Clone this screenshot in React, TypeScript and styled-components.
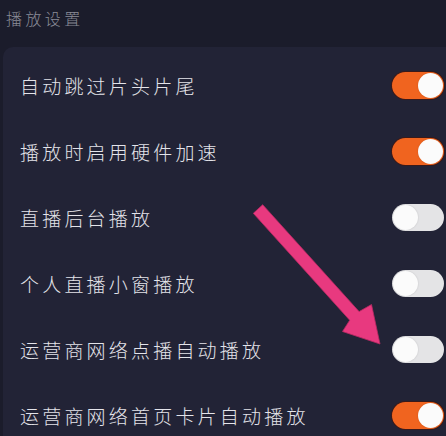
import styled, { createGlobalStyle } from "styled-components";

const GlobalStyle = createGlobalStyle`
    html, body {
        margin: 0;
        padding: 0;
        background: #1b1c2b;
    }
    body {
        font-family: "Noto Sans CJK SC", "Noto Sans", sans-serif;
    }
`;

const Page = styled.div`
    position: relative;
    width: 446px;
    height: 436px;
    overflow: hidden;
    background: #1b1c2b;
`;

const SectionTitle = styled.div`
    height: 47px;
    padding: 4px 0 0 6px;
    box-sizing: border-box;
    font-size: 16px;
    line-height: 28px;
    letter-spacing: 3.4px;
    font-weight: 300;
    color: #8a8b97;
`;

const Card = styled.div`
    margin-left: 3px;
    width: 460px;
    padding-top: 5px;
    background: #222336;
    border-radius: 10px 0 0 0;
    display: flex;
    flex-direction: column;
`;

const Row = styled.div`
    height: 66px;
    display: flex;
    align-items: center;
    justify-content: space-between;
    padding: 0 0 0 17px;
    width: 441px;
    box-sizing: border-box;
`;

const Label = styled.span`
    font-size: 19px;
    letter-spacing: 3.2px;
    font-weight: 300;
    color: #e4e4ea;
`;

const Track = styled.div<{ $on: boolean }>`
    width: 52px;
    height: 27px;
    border-radius: 14px;
    background: ${(p) => (p.$on ? "#f0641f" : "#e4e4e6")};
    box-shadow: ${(p) => (p.$on ? "0 0 0 1px #3a1a1a" : "none")};
    display: flex;
    align-items: center;
    justify-content: ${(p) => (p.$on ? "flex-end" : "flex-start")};
    padding: 0 1px;
    box-sizing: border-box;
`;

const Knob = styled.div`
    width: 25px;
    height: 25px;
    border-radius: 50%;
    background: #fbfbfb;
    box-shadow: 0 0 2px rgba(0, 0, 0, 0.15);
`;

const Pointer = styled.svg`
    position: absolute;
    left: 0;
    top: 0;
    pointer-events: none;
`;

const settings = [
    { label: "自动跳过片头片尾", on: true },
    { label: "播放时启用硬件加速", on: true },
    { label: "直播后台播放", on: false },
    { label: "个人直播小窗播放", on: false },
    { label: "运营商网络点播自动播放", on: false },
    { label: "运营商网络首页卡片自动播放", on: true },
];

export default function App() {
    return (
        <Page>
            <GlobalStyle />
            <SectionTitle>播放设置</SectionTitle>
            <Card>
                {settings.map((s) => (
                    <Row key={s.label}>
                        <Label>{s.label}</Label>
                        <Track $on={s.on}>
                            <Knob />
                        </Track>
                    </Row>
                ))}
            </Card>
            <Pointer width="446" height="436" viewBox="0 0 446 436">
                <polygon
                    points="253.3,213.3 262.7,204.7 359.1,311.6 371.5,304.5 380,344 342.5,331.5 349.7,320.2"
                    fill="#e8397f"
                    stroke="#b72a62"
                    strokeWidth="0.8"
                    strokeLinejoin="round"
                />
            </Pointer>
        </Page>
    );
}
